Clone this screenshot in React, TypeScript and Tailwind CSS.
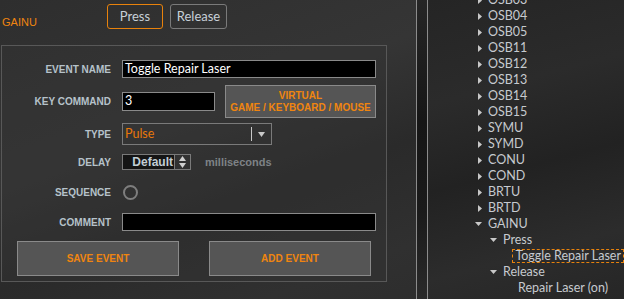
import React from "react";

const ORANGE = "text-[#f0850f]";

const tree: { label: string; depth: number; kind: "closed" | "open" | "leaf"; focus?: boolean }[] = [
  { label: "OSB03", depth: 0, kind: "closed" },
  { label: "OSB04", depth: 0, kind: "closed" },
  { label: "OSB05", depth: 0, kind: "closed" },
  { label: "OSB11", depth: 0, kind: "closed" },
  { label: "OSB12", depth: 0, kind: "closed" },
  { label: "OSB13", depth: 0, kind: "closed" },
  { label: "OSB14", depth: 0, kind: "closed" },
  { label: "OSB15", depth: 0, kind: "closed" },
  { label: "SYMU", depth: 0, kind: "closed" },
  { label: "SYMD", depth: 0, kind: "closed" },
  { label: "CONU", depth: 0, kind: "closed" },
  { label: "COND", depth: 0, kind: "closed" },
  { label: "BRTU", depth: 0, kind: "closed" },
  { label: "BRTD", depth: 0, kind: "closed" },
  { label: "GAINU", depth: 0, kind: "open" },
  { label: "Press", depth: 1, kind: "open" },
  { label: "Toggle Repair Laser", depth: 2, kind: "leaf", focus: true },
  { label: "Release", depth: 1, kind: "open" },
  { label: "Repair Laser (on)", depth: 2, kind: "leaf" },
];

function Arrow({ kind }: { kind: "closed" | "open" | "leaf" }) {
  if (kind === "leaf") return <span className="w-[13px]" />;
  return (
    <span className="flex w-[13px] items-center">
      {kind === "closed" ? (
        <svg width="4" height="7" viewBox="0 0 4 7" className="ml-[3px]">
          <path d="M0 0 L4 3.5 L0 7 Z" fill="#c8c8c8" />
        </svg>
      ) : (
        <svg width="7" height="4" viewBox="0 0 7 4" className="ml-0">
          <path d="M0 0 L7 0 L3.5 4 Z" fill="#c8c8c8" />
        </svg>
      )}
    </span>
  );
}

function Label({ children }: { children: React.ReactNode }) {
  return (
    <div className="w-[109px] shrink-0 text-right font-['Liberation_Sans',sans-serif] text-[10px] font-bold text-[#b6c2ca]">
      {children}
    </div>
  );
}

function Row({ className, label, children }: { className: string; label: string; children?: React.ReactNode }) {
  return (
    <div className={`flex items-center ${className}`}>
      <Label>{label}</Label>
      <div className="ml-[11px] flex items-center">{children}</div>
    </div>
  );
}

export default function App() {
  return (
    <div className="flex h-[299px] w-[624px] overflow-hidden bg-[linear-gradient(160deg,#2e2e2e_0%,#353535_35%,#2a2a2a_55%,#303030_75%,#2a2a2a_100%)] font-['Lato',sans-serif]">
      {/* left editor */}
      <div className="w-[416px] shrink-0">
        <div className="flex h-[45px] items-center">
          <span className={`ml-[2px] w-[105px] font-['Liberation_Sans',sans-serif] text-[11px] ${ORANGE}`}>GAINU</span>
          <button className="mt-[-12px] h-[25px] w-[56px] rounded-[3px] border border-[#e8820c] text-[13px] text-[#c8d0d8]">
            Press
          </button>
          <button className="mt-[-12px] ml-[7px] h-[25px] w-[57px] rounded-[3px] border border-[#7a7a7a] text-[13px] text-[#c8d0d8]">
            Release
          </button>
        </div>

        <div className="ml-px w-[386px] border border-[#585858] bg-[#343434]/40 pb-[5px]">
          <Row className="mt-[14px] h-[18px]" label="EVENT NAME">
            <div className="flex h-[18px] w-[254px] items-center border border-[#8a8a8a] bg-black px-[2px] text-[12.5px] text-white">
              Toggle Repair Laser
            </div>
          </Row>

          <Row className="mt-[7px] h-[33px]" label="KEY COMMAND">
            <div className="flex h-[19px] w-[93px] items-center border border-[#8a8a8a] bg-black px-[2px] text-[12.5px] text-white">
              3
            </div>
            <button className="ml-[10px] flex h-[33px] w-[151px] flex-col items-center justify-center border border-[#8a8a8a] bg-[#555555] font-['Liberation_Sans',sans-serif] text-[10px] font-bold leading-[12px] text-[#f0850f]">
              <span>VIRTUAL</span>
              <span>GAME / KEYBOARD / MOUSE</span>
            </button>
          </Row>

          <Row className="mt-[5px] h-[22px]" label="TYPE">
            <div className="flex h-[22px] w-[150px] items-center border border-[#7a7a7a] pl-[2px] text-[12.5px] text-[#e8780a]">
              <span className="flex-1">Pulse</span>
              <span className="h-[14px] w-px bg-[#c8c8c8]" />
              <span className="flex w-[19px] justify-center">
                <svg width="7" height="5" viewBox="0 0 7 5">
                  <path d="M0 0 L7 0 L3.5 5 Z" fill="#c8c8c8" />
                </svg>
              </span>
            </div>
          </Row>

          <Row className="mt-[9px] h-[16px]" label="DELAY">
            <div className="flex h-[16px] w-[53px] items-center justify-end border border-[#7a7a7a] bg-[#151515] pr-[1px] font-['Liberation_Sans',sans-serif] text-[12px] font-bold text-[#c2ced6]">
              Default
            </div>
            <div className="flex h-[16px] w-[16px] items-center justify-center border border-l-0 border-[#7a7a7a]">
              <svg width="7" height="12" viewBox="0 0 7 12">
                <path d="M0 5 L7 5 L3.5 0 Z" fill="#d0d0d0" />
                <path d="M0 7 L7 7 L3.5 12 Z" fill="#d0d0d0" />
              </svg>
            </div>
            <span className="ml-[14px] font-['Liberation_Sans',sans-serif] text-[11px] font-bold text-[#7e8286]">
              milliseconds
            </span>
          </Row>

          <Row className="mt-[14px] h-[16px]" label="SEQUENCE">
            <span className="ml-px h-[15px] w-[15px] rounded-full border-2 border-[#7e7e7e]" />
          </Row>

          <Row className="mt-[13px] h-[18px]" label="COMMENT">
            <div className="h-[18px] w-[254px] border border-[#8a8a8a] bg-black" />
          </Row>

          <div className="mt-[10px] flex h-[35px] pl-[15px]">
            <button className="h-[35px] w-[162px] border border-[#8a8a8a] bg-[#555555] font-['Liberation_Sans',sans-serif] text-[10px] font-bold text-[#f0850f]">
              SAVE EVENT
            </button>
            <button className="ml-[30px] h-[35px] w-[162px] border border-[#8a8a8a] bg-[#555555] font-['Liberation_Sans',sans-serif] text-[10px] font-bold text-[#f0850f]">
              ADD EVENT
            </button>
          </div>
        </div>
      </div>

      {/* splitter */}
      <div className="w-px shrink-0 bg-[#8c8c8c]" />
      <div className="w-[10px] shrink-0 bg-[linear-gradient(180deg,#262626_0%,#161616_40%,#1a1a1a_70%,#2a2a2a_100%)]" />
      <div className="w-px shrink-0 bg-[#8c8c8c]" />

      {/* tree */}
      <div className="flex-1 overflow-hidden bg-[linear-gradient(165deg,#252525_0%,#2b2b2b_30%,#222222_55%,#2c2c2c_80%,#262626_100%)] pl-[47px]">
        <div className="mt-[-8px]">
          {tree.map((n, i) => (
            <div key={i} className="flex h-[16px] items-center whitespace-nowrap text-[12.5px] text-[#c6cacf]">
              <span style={{ width: n.depth * 15 }} />
              <Arrow kind={n.kind} />
              {n.focus ? (
                <span className="ml-[-2px] flex h-[14px] items-center border border-dashed border-[#e8820c] px-[2px]">
                  {n.label}
                </span>
              ) : (
                <span>{n.label}</span>
              )}
            </div>
          ))}
        </div>
      </div>
    </div>
  );
}
